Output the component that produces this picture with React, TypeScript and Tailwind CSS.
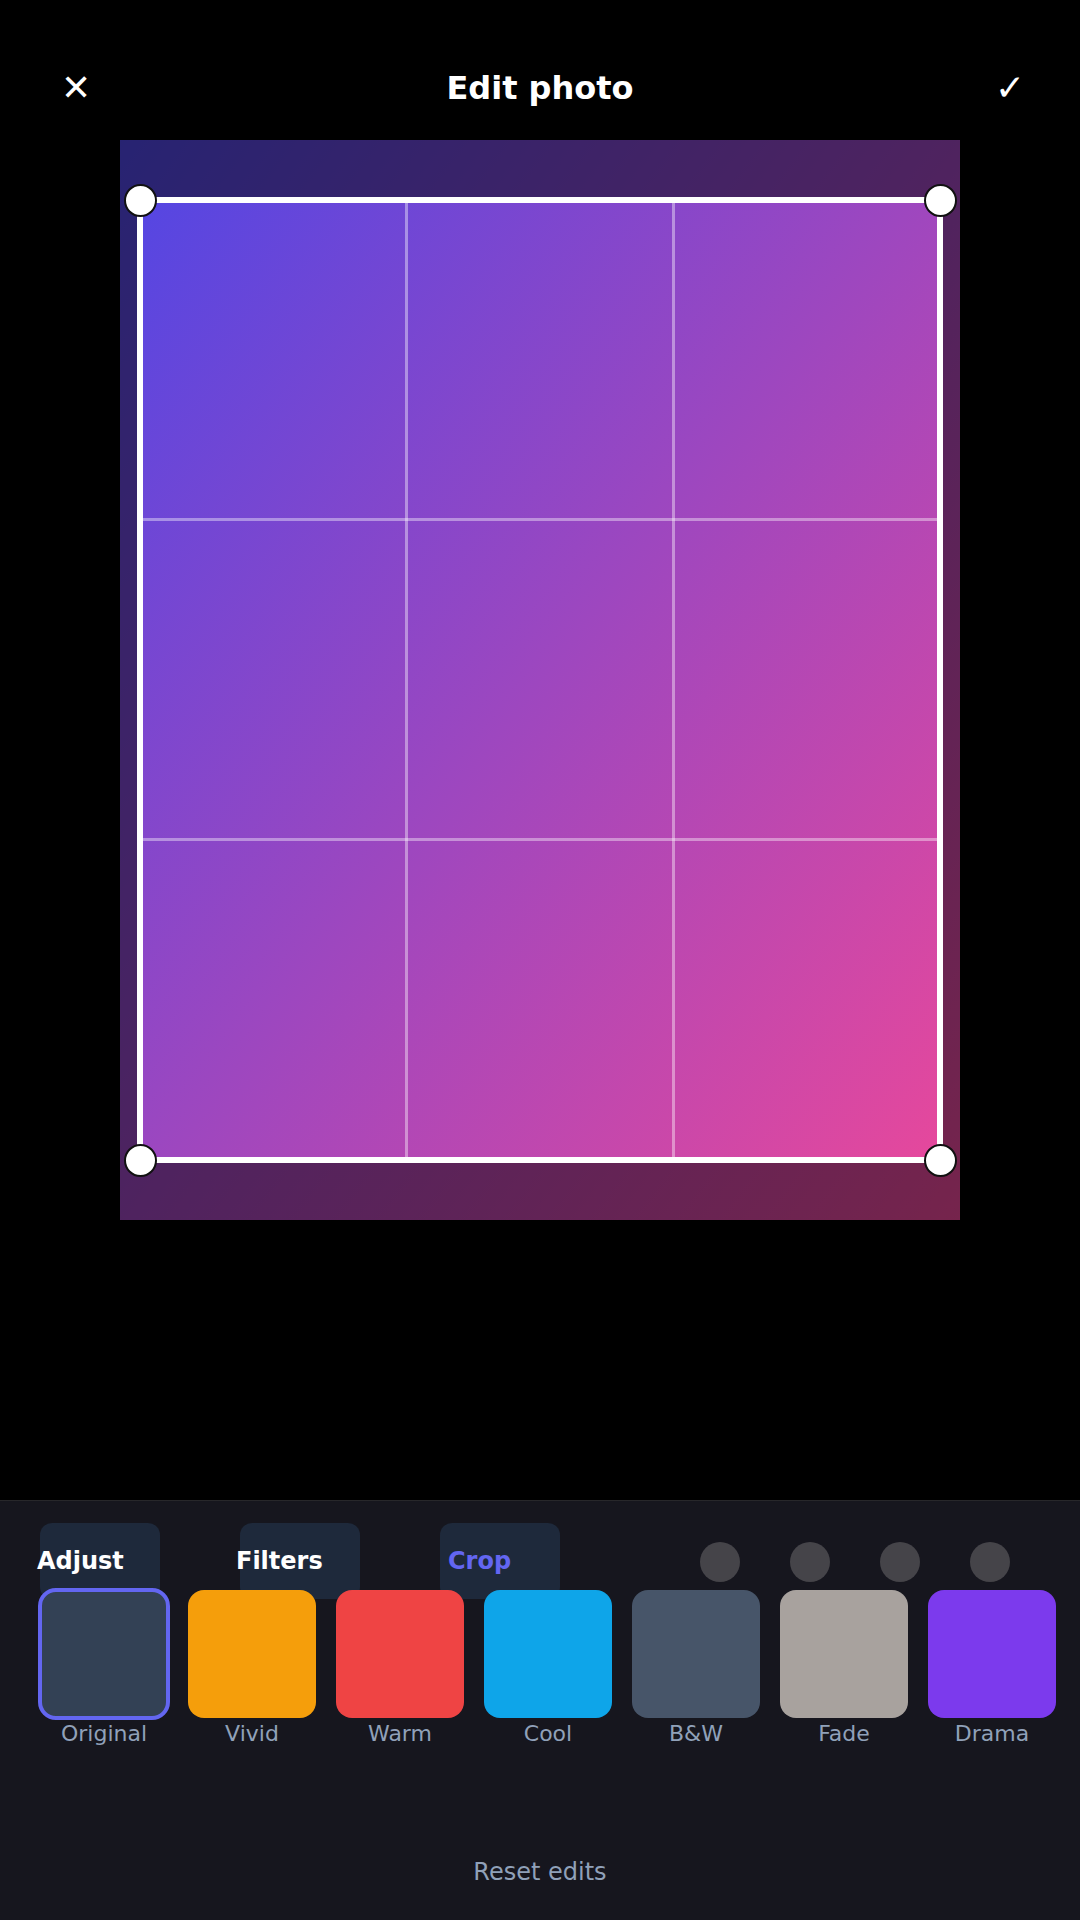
const tabs = [
  { label: 'Adjust', offset: 'ml-[-3px]', color: 'text-white' },
  { label: 'Filters', offset: 'ml-[-4px]', color: 'text-white' },
  { label: 'Crop', offset: 'ml-[8px]', color: 'text-[#6366f1]' },
]

const filters = [
  { name: 'Original', swatch: 'bg-[#334155]', active: true },
  { name: 'Vivid', swatch: 'bg-[#f59e0b]' },
  { name: 'Warm', swatch: 'bg-[#ef4444]' },
  { name: 'Cool', swatch: 'bg-[#0ea5e9]' },
  { name: 'B&W', swatch: 'bg-[#475569]' },
  { name: 'Fade', swatch: 'bg-[#a8a29e]' },
  { name: 'Drama', swatch: 'bg-[#7c3aed]' },
]

function Handle({ pos }: { pos: string }) {
  return <div className={`absolute h-[33px] w-[33px] rounded-full border-2 border-[#111] bg-white ${pos}`} />
}

function CropFrame() {
  return (
    <div className="absolute left-[17px] top-[57px] h-[966px] w-[806px] border-[6px] border-white shadow-[0_0_0_2000px_rgba(0,0,0,0.5)]">
      {/* rule of thirds */}
      <div className="absolute top-0 bottom-0 left-[262px] w-[3px] bg-white/40" />
      <div className="absolute top-0 bottom-0 left-[529px] w-[3px] bg-white/40" />
      <div className="absolute left-0 right-0 top-[315px] h-[3px] bg-white/40" />
      <div className="absolute left-0 right-0 top-[635px] h-[3px] bg-white/40" />

      <Handle pos="left-[-19px] top-[-19px]" />
      <Handle pos="left-[781px] top-[-19px]" />
      <Handle pos="left-[-19px] top-[941px]" />
      <Handle pos="left-[781px] top-[941px]" />
    </div>
  )
}

export default function App() {
  return (
    <div className="flex h-[1920px] w-[1080px] flex-col bg-black font-['DejaVu_Sans',sans-serif]">
      <header className="h-[128px] px-12 pt-12">
        <div className="flex h-20 items-center justify-between">
          <button className="flex w-14 justify-center text-[36px] leading-[40px] text-white">✕</button>
          <h1 className="text-[32px] font-bold leading-[40px] text-white">Edit photo</h1>
          <button className="flex w-14 translate-x-[6px] justify-center text-[36px] leading-[40px] text-white">✓</button>
        </div>
      </header>

      <div className="relative mx-auto mt-3 h-[1080px] w-[840px] overflow-hidden bg-[linear-gradient(to_bottom_right,#4f46e5,#ec4899)]">
        <CropFrame />
      </div>

      <div className="mt-auto h-[420px] border-t border-[#27272a] bg-[#16161e] pt-[22px]">
        <div className="flex h-[67px] items-start pl-10">
          {tabs.map((t) => (
            <div key={t.label} className="mr-[80px] flex h-[76px] w-[120px] shrink-0 items-center rounded-xl bg-[#1e293b]">
              <span className={`whitespace-nowrap text-[24px] font-bold leading-[28px] ${t.color} ${t.offset}`}>{t.label}</span>
            </div>
          ))}
          <div className="ml-[60px] mt-[19px] flex gap-[50px]">
            {[0, 1, 2, 3].map((i) => (
              <div key={i} className="h-10 w-10 rounded-full bg-[#454449]" />
            ))}
          </div>
        </div>

        <div className="flex items-start gap-5 pl-10">
          {filters.map((f) => (
            <div key={f.name} className="flex w-32 shrink-0 flex-col items-center">
              <div
                className={`h-32 w-32 rounded-2xl ${f.swatch} ${f.active ? 'outline-4 outline-offset-[-2px] outline-[#6366f1]' : ''}`}
              />
              <span className="mt-[3px] text-[22px] leading-[26px] text-[#90a1b9]">{f.name}</span>
            </div>
          ))}
        </div>

        <p className="mt-[111px] text-center text-[24px] leading-[28px] text-[#90a1b9]">Reset edits</p>
      </div>
    </div>
  )
}
